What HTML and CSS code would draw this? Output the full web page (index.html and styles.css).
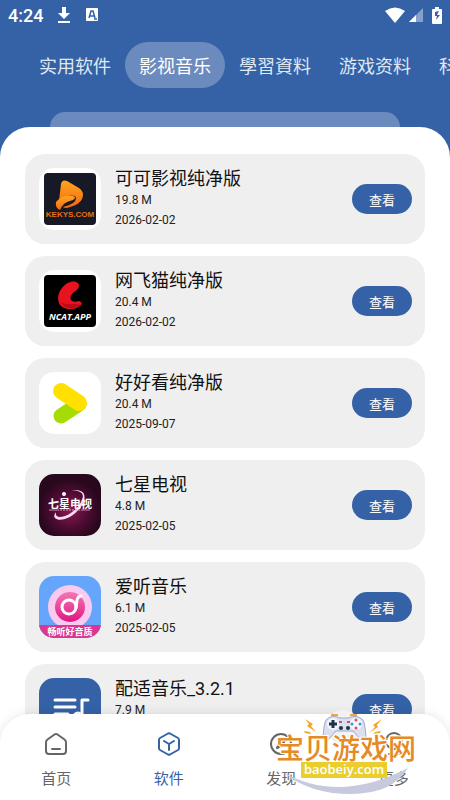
FILE: index.html
```html
<!DOCTYPE html>
<html lang="zh-CN">
<head>
    <meta charset="UTF-8">
    <meta name="viewport" content="width=device-width, initial-scale=1.0">
    <title>软件</title>
    <link rel="stylesheet" href="styles.css">
</head>
<body>
    <div class="screen">
        <header class="header">
            <div class="status">
                <span class="time">4:24</span>
                <svg class="status-download" width="14" height="18" viewBox="0 0 14 18"><path d="M5 1h4v6h4l-6 6-6-6h4zM1 15h12v2H1z" fill="#fff"/></svg>
                <svg width="12" height="14" viewBox="0 0 12 14"><rect width="12" height="13" rx="1" fill="#fff"/><path d="M3 10l2-7h2l2 7M4 8h4M8 11h3" fill="none" stroke="#3562a7" stroke-width="1.5"/></svg>
                <span class="status-right">
                    <svg width="20" height="16" viewBox="0 0 20 16"><path d="M0 4Q10-3 20 4L10 16z" fill="#fff"/></svg>
                    <svg width="14" height="14" viewBox="0 0 14 14"><path d="M14 0v14H0z" fill="#86a1ca"/><path d="M7 7v7H0z" fill="#fff"/></svg>
                    <svg class="status-battery" width="10" height="17" viewBox="0 0 10 17"><path d="M3 0h4v2h2q1 0 1 1v13q0 1-1 1H1q-1 0-1-1V3q0-1 1-1h2z" fill="#fff"/><path d="M7 4L3 5v4h2l-1 4 4-5H5z" fill="#3562a7"/></svg>
                </span>
            </div>
            <div class="tabs">
                <button class="tab">实用软件</button>
                <button class="tab active">影视音乐</button>
                <button class="tab">學習資料</button>
                <button class="tab">游戏资料</button>
                <button class="tab">科学上网</button>
            </div>
            <div class="peek"></div>
        </header>

        <main class="sheet">
            <ul class="list">
                <li class="card">
                    <svg class="app-icon" viewBox="0 0 62 62">
                        <defs><linearGradient id="flame" x1="0" y1="0" x2="0" y2="1"><stop offset="0" stop-color="#ffa51f"/><stop offset="1" stop-color="#f4680f"/></linearGradient></defs>
                        <rect width="62" height="62" rx="15" fill="#fff"/>
                        <rect x="5" y="5" width="52" height="52" rx="4" fill="#171a26"/>
                        <path d="M22 16q1-5 6-3l12 7q6 4 3 11-2 5-12 8-5 2-7 0 13-3 13-9c-1-4-11-3-17 3z" fill="url(#flame)"/>
                        <path d="M17 34q7-8 17-6 4 1 0 4-7 2-9 4-3 3-4 6-5-2-4-8z" fill="url(#flame)"/>
                        <text class="kekys" x="31" y="49">KEKYS.COM</text>
                    </svg>
                    <div class="info"><h2>可可影视纯净版</h2><p>19.8 M</p><p>2026-02-02</p></div>
                    <button class="view">查看</button>
                </li>
                <li class="card">
                    <svg class="app-icon" viewBox="0 0 62 62">
                        <rect width="62" height="62" rx="15" fill="#fff"/>
                        <rect x="5" y="5" width="52" height="52" rx="4" fill="#000"/>
                        <path d="M39 13c-3-3-11-2-16 5-5 6-5 14-1 18 6 5 15 4 20-1q2-3-2-4-6 2-8-1-2-4 3-8c5-3 6-6 4-9z" fill="#e8131f"/>
                        <path d="M42 35q-4-1-8-1-8 1-12-2 2 5 7 6 8 2 13-3z" fill="#b90d19"/>
                        <text class="ncat" x="31" y="50">NCAT.APP</text>
                    </svg>
                    <div class="info"><h2>网飞猫纯净版</h2><p>20.4 M</p><p>2026-02-02</p></div>
                    <button class="view">查看</button>
                </li>
                <li class="card">
                    <svg class="app-icon" viewBox="0 0 62 62">
                        <rect width="62" height="62" rx="15" fill="#fff"/>
                        <path d="M22 44l18-12" stroke="#a5dc05" stroke-width="15" stroke-linecap="round"/>
                        <path d="M27 31l10 7 4-3-9-7z" fill="#7fb817"/>
                        <path d="M22 19l18 12" stroke="#ffe000" stroke-width="16" stroke-linecap="round"/>
                    </svg>
                    <div class="info"><h2>好好看纯净版</h2><p>20.4 M</p><p>2025-09-07</p></div>
                    <button class="view">查看</button>
                </li>
                <li class="card">
                    <svg class="app-icon" viewBox="0 0 62 62">
                        <defs><radialGradient id="plum" cy=".58"><stop offset="0" stop-color="#8d1755"/><stop offset=".6" stop-color="#4c0b31"/><stop offset="1" stop-color="#28081d"/></radialGradient></defs>
                        <rect width="62" height="62" rx="15" fill="url(#plum)"/>
                        <path d="M31 17c13-3 18 3 12 14-7 12-22 18-27 13q-2-2 1-6-1 5 4 5c8 0 19-9 22-17 3-7-2-10-12-9z" fill="#f9dced"/>
                        <circle cx="25" cy="20" r="2" fill="#fff"/>
                        <text class="qixing" x="31" y="34">七星电视</text>
                        <path d="M10 36h10M42 36h9" stroke="#cf8cb1"/>
                        <path d="M21 36h20" stroke="#d9a3c2" stroke-dasharray="2 1"/>
                    </svg>
                    <div class="info"><h2>七星电视</h2><p>4.8 M</p><p>2025-02-05</p></div>
                    <button class="view">查看</button>
                </li>
                <li class="card">
                    <svg class="app-icon" viewBox="0 0 62 62">
                        <defs>
                            <clipPath id="round"><rect width="62" height="62" rx="15"/></clipPath>
                            <linearGradient id="pink" x1="0" y1="0" x2="0" y2="1"><stop offset="0" stop-color="#f278b5"/><stop offset="1" stop-color="#e01682"/></linearGradient>
                        </defs>
                        <g clip-path="url(#round)">
                            <rect width="62" height="62" fill="#65a5fb"/>
                            <circle cx="31" cy="31" r="22" fill="#fac9ef"/>
                            <circle cx="31" cy="31" r="15" fill="url(#pink)"/>
                            <circle cx="30" cy="31" r="7" fill="none" stroke="#fff" stroke-width="3"/>
                            <path d="M37 32l1-8q1-4 4-4" fill="none" stroke="#fff" stroke-width="3" stroke-linecap="round"/>
                            <rect y="49" width="62" height="13" fill="#d93791"/>
                            <text class="slogan" x="31" y="59">畅听好音质</text>
                        </g>
                    </svg>
                    <div class="info"><h2>爱听音乐</h2><p>6.1 M</p><p>2025-02-05</p></div>
                    <button class="view">查看</button>
                </li>
                <li class="card">
                    <svg class="app-icon" viewBox="0 0 62 62">
                        <rect width="62" height="62" rx="15" fill="#3562a7"/>
                        <path d="M16 22h20M16 29h20M16 36h13M49 22h-6v16" fill="none" stroke="#fff" stroke-width="3" stroke-linecap="round" stroke-linejoin="round"/>
                        <circle cx="39" cy="39" r="4" fill="none" stroke="#fff" stroke-width="3"/>
                    </svg>
                    <div class="info"><h2>配适音乐_3.2.1</h2><p>7.9 M</p><p>2025-02-05</p></div>
                    <button class="view">查看</button>
                </li>
            </ul>
        </main>

        <nav class="bottom-nav">
            <a href="#home">
                <svg class="nav-icon" viewBox="0 0 24 24"><path d="M10.500 2.500q1.500-1 3 0l7 5q1.500 1 1.500 3V19q0 3-3 3H5q-3 0-3-3v-8.500q0-2 1.500-3zM8 17h8"/></svg>
                首页
            </a>
            <a href="#apps" class="current">
                <svg class="nav-icon" viewBox="0 0 24 24"><path d="M11 1.500q1-.5 2 0l8 4.500q1 .6 1 2v8q0 1.400-1 2l-8 4.500q-1 .5-2 0L3 18q-1-.6-1-2V8q0-1.400 1-2zM7 9l5 3 5-3M12 12v6"/></svg>
                软件
            </a>
            <a href="#discover">
                <svg class="nav-icon" viewBox="0 0 24 24"><circle cx="12" cy="12" r="10"/><path d="M16 8l-2.500 5.500L8 16l2.500-5.500z"/></svg>
                发现
            </a>
            <a href="#more">
                <svg class="nav-icon" viewBox="0 0 24 24"><circle cx="12" cy="9" r="8"/><path d="M7 22h11"/></svg>
                更多
            </a>
        </nav>

        <div class="badge">
            <svg width="144" height="92" viewBox="0 0 144 92">
                <circle cx="71" cy="19" r="17" fill="#f2f2f2"/>
                <path d="M11 64Q66 96 136 60 120 86 79 86 37 86 11 64z" fill="#c7cadd"/>
                <g fill="#f2a52b"><path d="M33 11l8 5-2 2 5 6-9-6 2-2zM32 23l6 1 1 2-6-1zM110 11l-9 6 2 2-6 6 9-6-1-2zM109 23l-6 1-2 2 7-1z"/></g>
                <path d="M59 7h7M78 7h7" stroke="#e9a93b" stroke-width="2"/>
                <path d="M54 12q6-6 14-2h8q9-4 15 2 2 3 3 17-1 6-5 3l-8-9H64l-8 9q-4 3-5-3 1-14 3-17z" fill="#dcdff0" stroke="#a3a9c6"/>
                <circle cx="61" cy="16" r="6" fill="#f4f5fb"/><circle cx="84" cy="16" r="6" fill="#f4f5fb"/>
                <path d="M57 16h8M61 12v8" stroke="#173548" stroke-width="3"/>
                <circle cx="69" cy="20" r="2" fill="#173548"/><circle cx="76" cy="20" r="2" fill="#173548"/>
                <path d="M67 14h3M75 14h3" stroke="#d64b70" stroke-width="2"/>
                <circle cx="84" cy="12" r="1.500" fill="#e54960"/><circle cx="84" cy="20" r="1.500" fill="#e54960"/><circle cx="80" cy="16" r="1.500" fill="#29a9c9"/><circle cx="88" cy="16" r="1.500" fill="#29a9c9"/>
                <text class="badge-name" x="74" y="51">宝贝游戏网</text>
                <rect x="29" y="54" width="86" height="16" fill="#e9ce2e"/>
                <text class="badge-url" x="72" y="66">baobeiy.com</text>
            </svg>
        </div>
    </div>
</body>
</html>
```

FILE: styles.css
```css
* { box-sizing: border-box; }
body { margin: 0; background: #fff; }
body, button { font-family: Roboto, "Noto Sans CJK SC", sans-serif; }
button { border: 0; cursor: pointer; }
.screen { position: relative; display: flex; flex-direction: column; height: 100vh; overflow: hidden; background: #3562a7; }

.header { flex: none; color: #fff; }
.status { display: flex; align-items: center; height: 30px; padding: 0 8px; }
.time { font-size: 18px; font-weight: 500; }
.status-download { margin: 0 15px 0 14px; }
.status-right { display: flex; align-items: center; gap: 4px; margin-left: auto; }
.status-battery { margin-left: 5px; }

.tabs { display: flex; margin-top: 12px; padding-left: 25px; overflow-x: auto; scrollbar-width: none; }
.tab { flex: none; height: 46px; padding: 0 14px; border-radius: 23px; background: none; color: #dfe7f2; font-size: 18px; }
.tab.active { background: #6b8bbe; color: #fff; }
.peek { height: 15px; margin: 24px 50px 0; border-radius: 15px 15px 0 0; background: #6b8bbe; }

.sheet { flex: 1; min-height: 0; overflow: hidden; border-radius: 30px 30px 0 0; background: #fff; }
.list { display: flex; flex-direction: column; gap: 12px; height: 100%; margin: 0; padding: 27px 25px 90px; overflow-y: auto; scrollbar-width: none; list-style: none; }
.card { display: flex; flex: none; align-items: center; gap: 14px; padding: 14px 13px 14px 14px; border-radius: 20px; background: #efefef; }
.app-icon { flex: none; width: 62px; height: 62px; }
.info { flex: 1; min-width: 0; color: #111; }
.info h2 { margin: 0; font-size: 18px; font-weight: 400; line-height: 22px; }
.info p { margin: 0; font-size: 12px; line-height: 20px; color: #222; }
.view { flex: none; width: 60px; height: 30px; padding: 0; border-radius: 15px; background: #3562a7; color: #fff; font-size: 13px; }

.app-icon text { text-anchor: middle; font-family: "Liberation Sans", "Noto Sans CJK SC", sans-serif; }
.app-icon .kekys { fill: #e5700f; font-size: 8px; font-weight: 700; }
.app-icon .ncat { fill: #fff; font-family: "Open Sans", sans-serif; font-size: 9px; font-style: italic; font-weight: 700; }
.app-icon .qixing { fill: #fff; font-size: 11px; font-weight: 700; }
.app-icon .slogan { fill: #fff; font-size: 9px; font-weight: 700; }

.bottom-nav { position: absolute; right: 0; bottom: 0; left: 0; display: flex; height: 86px; padding-top: 18px; border-radius: 30px 30px 0 0; background: #fff; box-shadow: 0 0 12px rgba(0, 0, 0, 0.1); }
.bottom-nav a { display: flex; flex: 1; flex-direction: column; align-items: center; gap: 12px; color: #666; font-size: 15px; line-height: 22px; text-decoration: none; }
.bottom-nav .current { color: #3562a7; }
.nav-icon { width: 24px; height: 24px; fill: none; stroke: currentColor; stroke-width: 2; stroke-linecap: round; stroke-linejoin: round; }

.badge { position: absolute; right: 34px; bottom: 0; height: 92px; pointer-events: none; }
.badge text { text-anchor: middle; }
.badge-name { fill: #e58a25; stroke: #fff; stroke-width: 2px; paint-order: stroke; font-family: "Noto Sans CJK SC", sans-serif; font-size: 28px; font-weight: 500; }
.badge-url { fill: #fff; font-family: "Open Sans", sans-serif; font-size: 13px; font-weight: 600; }
```
